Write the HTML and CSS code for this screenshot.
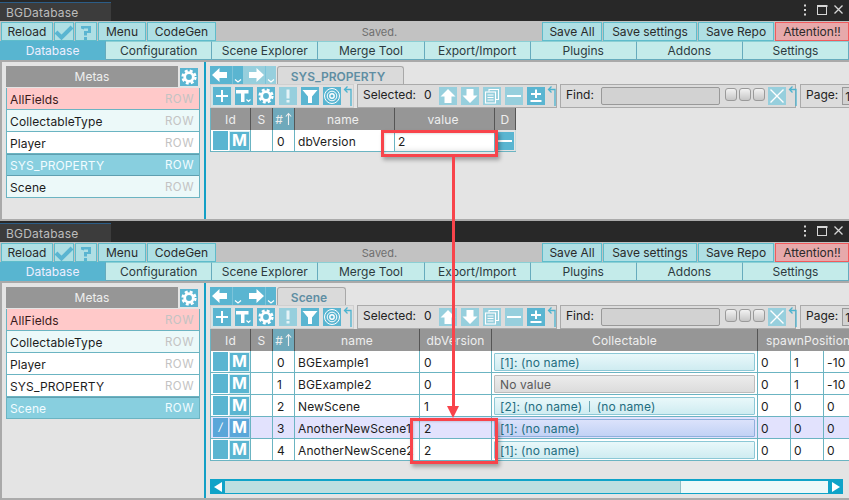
FILE: index.html
```html
<!DOCTYPE html>
<html lang="en">
<head>
<meta charset="utf-8">
<title>BGDatabase</title>
<link rel="stylesheet" href="styles.css">
</head>
<body>
<svg class="defs" width="0" height="0" aria-hidden="true">
  <symbol id="i-gear" viewBox="0 0 18 18"><circle cx="9" cy="9" r="4.300" fill="none" stroke="#fff" stroke-width="2.800"/><circle cx="9" cy="9" r="6.400" fill="none" stroke="#fff" stroke-width="2.400" stroke-dasharray="2.900 2.125"/></symbol>
  <symbol id="i-left" viewBox="0 0 22 18"><path d="M2 9l7.500-7v4H17v6H9.500v4z" fill="#fff"/></symbol>
  <symbol id="i-right" viewBox="0 0 22 18"><path d="M21 9l-7.500-7v4H6v6h7.500v4z" fill="#fff"/></symbol>
  <symbol id="i-drop" viewBox="0 0 10 18"><path d="M2 13.500l3 2.500 3-2.500" fill="none" stroke="#fff" stroke-width="1.200"/></symbol>
  <symbol id="i-plus" viewBox="0 0 18 18"><path d="M8 3h2v5h5v2h-5v5H8v-5H3V8h5z" fill="#fff"/></symbol>
  <symbol id="i-field" viewBox="0 0 18 18"><path d="M1 3h12.500v3.500H9.500V15H6V6.500H1z" fill="#fff"/><path d="M11.500 12.500l2 2 2-2" fill="none" stroke="#fff" stroke-width="1.100"/></symbol>
  <symbol id="i-warn" viewBox="0 0 18 18"><path d="M7.500 2.500h3v9h-3zM7.500 13h3v2.500h-3z" fill="#fff" opacity=".75"/></symbol>
  <symbol id="i-filter" viewBox="0 0 18 18"><path d="M1.500 3h15l-5.500 6.500V16H7V9.500z" fill="#fff"/></symbol>
  <symbol id="i-target" viewBox="0 0 18 18"><g fill="none" stroke="#fff"><circle cx="9" cy="9" r="7.500"/><circle cx="9" cy="9" r="4.800"/><circle cx="9" cy="9" r="2.200" stroke-width="1.400"/></g></symbol>
  <symbol id="i-bent" viewBox="0 0 10 22"><path d="M8 21V4.500H2.500M4.500 1.500L1.500 4.500 4.500 7.500" fill="none" stroke="#4cb3cf" stroke-width="1.300"/></symbol>
  <symbol id="i-up" viewBox="0 0 18 18"><path d="M9 2l7.500 7.500H12.500V16h-7V9.500H1.500z" fill="#fff"/></symbol>
  <symbol id="i-down" viewBox="0 0 18 18"><path d="M9 16L1.500 8.500H5.500V2h7v6.500h4z" fill="#fff"/></symbol>
  <symbol id="i-copy" viewBox="0 0 18 18"><g fill="none" stroke="#fff" stroke-width="1.100"><path d="M6 4.500V2.500h9.500v10H13"/><rect x="2.500" y="5" width="10" height="11"/><path d="M4.500 8h6M4.500 10.500h6M4.500 13h6"/></g></symbol>
  <symbol id="i-minus" viewBox="0 0 18 18"><path d="M2 8h14v2H2z" fill="#fff"/></symbol>
  <symbol id="i-pm" viewBox="0 0 18 18"><path d="M8 2.500h2v3.500h4v2h-4v3H8V8H4V6h4zM3.500 13h11v2h-11z" fill="#fff"/></symbol>
  <symbol id="i-x" viewBox="0 0 18 18"><path d="M2.500 2.500l13 13M15.500 2.500l-13 13" fill="none" stroke="#fff" stroke-width="1.400"/></symbol>
  <symbol id="i-check" viewBox="0 0 20 18"><path d="M2 9l5.500 5.500L18 4" fill="none" stroke="#5ab5d1" stroke-width="4"/></symbol>
  <symbol id="i-q" viewBox="0 0 20 18"><path d="M5 5.500V3h10v7h-4v2.500H8V8h4V5.500H8v1z" fill="#5ab5d1"/><path d="M8 14h3v3H8z" fill="#5ab5d1"/></symbol>
  <symbol id="i-controls" viewBox="0 0 44 14"><g fill="#d6d6d6"><path d="M1 1.500h2v2H1zM1 6h2v2H1zM1 10.500h2v2H1z"/></g><rect x="14.500" y="2.500" width="9" height="9" fill="none" stroke="#d6d6d6"/><path d="M14.500 2h10v2h-10z" fill="#d6d6d6"/><path d="M31.500 2.500l8 8M39.500 2.500l-8 8" stroke="#d6d6d6" stroke-width="1.300"/></symbol>
  <symbol id="i-sort" viewBox="0 0 7 14"><path d="M3.500 13V2M.8 4.500L3.500 1.500 6.200 4.500" fill="none" stroke="#eee" stroke-width="1.100"/></symbol>
</svg>

<div class="win win-a">
  <div class="titlebar"><div class="wintab">BGDatabase</div><svg class="winctl"><use href="#i-controls"/></svg></div>
  <div class="toolbar">
    <button class="tb w-reload">Reload</button><button class="tb w-ic"><svg class="ic20"><use href="#i-check"/></svg></button><button class="tb w-ic2"><svg class="ic20"><use href="#i-q"/></svg></button><button class="tb w-menu">Menu</button><button class="tb w-code">CodeGen</button>
    <div class="saved">Saved.</div>
    <button class="tb w-saveall">Save All</button><button class="tb w-saveset">Save settings</button><button class="tb w-saverepo">Save Repo</button><button class="tb attn">Attention!!</button>
  </div>
  <div class="tabs"><div class="tab active">Database</div><div class="tab">Configuration</div><div class="tab">Scene Explorer</div><div class="tab">Merge Tool</div><div class="tab">Export/Import</div><div class="tab">Plugins</div><div class="tab">Addons</div><div class="tab">Settings</div></div>
  <div class="content">
    <aside class="side">
      <div class="metas-head"><div class="metas">Metas</div><span class="ib gearbtn"><svg><use href="#i-gear"/></svg></span></div>
      <div class="mlist">
        <div class="mrow pink"><span>AllFields</span><em>ROW</em></div>
        <div class="mrow tint"><span>CollectableType</span><em>ROW</em></div>
        <div class="mrow"><span>Player</span><em>ROW</em></div>
        <div class="mrow sel"><span>SYS_PROPERTY</span><em>ROW</em></div>
        <div class="mrow tint"><span>Scene</span><em>ROW</em></div>
      </div>
    </aside>
    <main class="main">
      <div class="nav">
        <span class="navbtn"><svg class="nv"><use href="#i-left"/></svg><svg class="nd"><use href="#i-drop"/></svg></span>
        <span class="navbtn off"><svg class="nv"><use href="#i-right"/></svg><svg class="nd"><use href="#i-drop"/></svg></span>
        <div class="crumb w-sys">SYS_PROPERTY</div>
      </div>
      <div class="bar">
        <div class="grp g1">
          <span class="ib framed"><svg><use href="#i-plus"/></svg></span><span class="ib"><svg><use href="#i-field"/></svg></span><span class="ib"><svg><use href="#i-gear"/></svg></span><span class="ib dis"><svg><use href="#i-warn"/></svg></span><span class="ib"><svg><use href="#i-filter"/></svg></span><span class="ib"><svg><use href="#i-target"/></svg></span><svg class="bent"><use href="#i-bent"/></svg>
        </div>
        <div class="grp g2">
          <span class="lbl sel-l">Selected:</span><span class="lbl sel-n">0</span>
          <span class="ib dis"><svg><use href="#i-up"/></svg></span><span class="ib dis"><svg><use href="#i-down"/></svg></span><span class="ib dis"><svg><use href="#i-copy"/></svg></span><span class="ib dis"><svg><use href="#i-minus"/></svg></span><span class="ib"><svg><use href="#i-pm"/></svg></span><svg class="bent"><use href="#i-bent"/></svg>
        </div>
        <div class="grp g3">
          <span class="lbl">Find:</span><span class="findin"></span>
          <span class="togs"><span class="tog"></span><span class="tog"></span><span class="tog"></span></span>
          <span class="ib dis"><svg><use href="#i-x"/></svg></span><svg class="bent"><use href="#i-bent"/></svg>
        </div>
        <div class="grp g4"><span class="lbl">Page:</span><span class="pagein">1</span></div>
      </div>
      <div class="grid grid-a">
        <div class="row head"><div class="c c-id">Id</div><div class="c c-s">S</div><div class="c c-n sorted">#<svg class="ar"><use href="#i-sort"/></svg></div><div class="c c-name1">name</div><div class="c c-val">value</div><div class="c c-d">D</div></div>
        <div class="row"><div class="c c-id idc"><i></i><b>M</b></div><div class="c c-s"></div><div class="c c-n">0</div><div class="c c-name1">dbVersion</div><div class="c c-val hl">2</div><div class="c c-d dcell"><span class="ib del"><svg><use href="#i-minus"/></svg></span></div></div>
      </div>
    </main>
  </div>
</div>

<div class="win win-b">
  <div class="titlebar"><div class="wintab">BGDatabase</div><svg class="winctl"><use href="#i-controls"/></svg></div>
  <div class="toolbar">
    <button class="tb w-reload">Reload</button><button class="tb w-ic"><svg class="ic20"><use href="#i-check"/></svg></button><button class="tb w-ic2"><svg class="ic20"><use href="#i-q"/></svg></button><button class="tb w-menu">Menu</button><button class="tb w-code">CodeGen</button>
    <div class="saved">Saved.</div>
    <button class="tb w-saveall">Save All</button><button class="tb w-saveset">Save settings</button><button class="tb w-saverepo">Save Repo</button><button class="tb attn">Attention!!</button>
  </div>
  <div class="tabs"><div class="tab active">Database</div><div class="tab">Configuration</div><div class="tab">Scene Explorer</div><div class="tab">Merge Tool</div><div class="tab">Export/Import</div><div class="tab">Plugins</div><div class="tab">Addons</div><div class="tab">Settings</div></div>
  <div class="content">
    <aside class="side">
      <div class="metas-head"><div class="metas">Metas</div><span class="ib gearbtn"><svg><use href="#i-gear"/></svg></span></div>
      <div class="mlist">
        <div class="mrow pink"><span>AllFields</span><em>ROW</em></div>
        <div class="mrow tint"><span>CollectableType</span><em>ROW</em></div>
        <div class="mrow"><span>Player</span><em>ROW</em></div>
        <div class="mrow"><span>SYS_PROPERTY</span><em>ROW</em></div>
        <div class="mrow sel"><span>Scene</span><em>ROW</em></div>
      </div>
    </aside>
    <main class="main">
      <div class="nav">
        <span class="navbtn"><svg class="nv"><use href="#i-left"/></svg><svg class="nd"><use href="#i-drop"/></svg></span>
        <span class="navbtn"><svg class="nv"><use href="#i-right"/></svg><svg class="nd"><use href="#i-drop"/></svg></span>
        <div class="crumb w-scene">Scene</div>
      </div>
      <div class="bar">
        <div class="grp g1">
          <span class="ib framed"><svg><use href="#i-plus"/></svg></span><span class="ib"><svg><use href="#i-field"/></svg></span><span class="ib"><svg><use href="#i-gear"/></svg></span><span class="ib dis"><svg><use href="#i-warn"/></svg></span><span class="ib"><svg><use href="#i-filter"/></svg></span><span class="ib"><svg><use href="#i-target"/></svg></span><svg class="bent"><use href="#i-bent"/></svg>
        </div>
        <div class="grp g2">
          <span class="lbl sel-l">Selected:</span><span class="lbl sel-n">0</span>
          <span class="ib dis"><svg><use href="#i-up"/></svg></span><span class="ib dis"><svg><use href="#i-down"/></svg></span><span class="ib dis"><svg><use href="#i-copy"/></svg></span><span class="ib dis"><svg><use href="#i-minus"/></svg></span><span class="ib"><svg><use href="#i-pm"/></svg></span><svg class="bent"><use href="#i-bent"/></svg>
        </div>
        <div class="grp g3">
          <span class="lbl">Find:</span><span class="findin"></span>
          <span class="togs"><span class="tog"></span><span class="tog"></span><span class="tog"></span></span>
          <span class="ib dis"><svg><use href="#i-x"/></svg></span><svg class="bent"><use href="#i-bent"/></svg>
        </div>
        <div class="grp g4"><span class="lbl">Page:</span><span class="pagein">1</span></div>
      </div>
      <div class="grid">
        <div class="row head"><div class="c c-id">Id</div><div class="c c-s">S</div><div class="c c-n sorted">#<svg class="ar"><use href="#i-sort"/></svg></div><div class="c c-name2">name</div><div class="c c-db">dbVersion</div><div class="c c-coll">Collectable</div><div class="c c-spawn">spawnPosition</div></div>
        <div class="row"><div class="c c-id idc"><i></i><b>M</b></div><div class="c c-s"></div><div class="c c-n">0</div><div class="c c-name2">BGExample1</div><div class="c c-db">0</div><div class="c c-coll"><span class="fld">[1]: (no name)</span></div><div class="c c-x">0</div><div class="c c-x">1</div><div class="c c-z">-10</div></div>
        <div class="row"><div class="c c-id idc"><i></i><b>M</b></div><div class="c c-s"></div><div class="c c-n">1</div><div class="c c-name2">BGExample2</div><div class="c c-db">0</div><div class="c c-coll"><span class="fld none">No value</span></div><div class="c c-x">0</div><div class="c c-x">1</div><div class="c c-z">-10</div></div>
        <div class="row"><div class="c c-id idc"><i></i><b>M</b></div><div class="c c-s"></div><div class="c c-n">2</div><div class="c c-name2">NewScene</div><div class="c c-db">1</div><div class="c c-coll"><span class="fld">[2]: (no name) <u></u> (no name)</span></div><div class="c c-x">0</div><div class="c c-x">0</div><div class="c c-z">0</div></div>
        <div class="row hover"><div class="c c-id idc"><i>/</i><b>M</b></div><div class="c c-s"></div><div class="c c-n">3</div><div class="c c-name2">AnotherNewScene1</div><div class="c c-db">2</div><div class="c c-coll"><span class="fld">[1]: (no name)</span></div><div class="c c-x">0</div><div class="c c-x">0</div><div class="c c-z">0</div></div>
        <div class="row"><div class="c c-id idc"><i></i><b>M</b></div><div class="c c-s"></div><div class="c c-n">4</div><div class="c c-name2">AnotherNewScene2</div><div class="c c-db">2</div><div class="c c-coll"><span class="fld">[1]: (no name)</span></div><div class="c c-x">0</div><div class="c c-x">0</div><div class="c c-z">0</div></div>
      </div>
      <div class="scroll"><span class="sbtn"><span class="tri-l"></span></span><span class="thumb"></span><span class="strack"></span><span class="sbtn"><span class="tri-r"></span></span></div>
    </main>
  </div>
</div>

<div class="note box-a"></div>
<div class="note box-b"></div>
<div class="note link"></div>
<div class="note head-tip"></div>
</body>
</html>
```
FILE: styles.css
```css
* { box-sizing: border-box; }
html, body { margin: 0; padding: 0; }
body {
  width: 849px; height: 500px; overflow: hidden; position: relative;
  background: #282828; color: #1c1c1c;
  font: 12px/1 Inter, "Liberation Sans", sans-serif;
}
.defs { position: absolute; }
svg { display: block; }

.win { display: flex; flex-direction: column; overflow: hidden; }
.win-a { height: 221px; }
.win-b { height: 279px; }
.titlebar { height: 21px; flex: none; display: flex; justify-content: space-between; background: #282828; }
.wintab {
  width: 111px; height: 19px; margin-top: 2px; padding: 4px 0 0 6px;
  background: #3c3c3c; border-top: 1px solid #2c5d87; color: #bdbdbd; letter-spacing: .2px;
}
.winctl { width: 44px; height: 14px; margin: 3px 2px 0 0; }

.toolbar { height: 20px; flex: none; display: flex; align-items: flex-start; padding: 1px 0 0 1px; background: #c2c2c2; }
.tb {
  height: 19px; margin: 0 1px 0 0; padding: 0; border: 1px solid #5fbccb; background: #afdfe4;
  color: #2a2a2a; font: 12px/1 Inter, "Liberation Sans", sans-serif;
  display: flex; align-items: center; justify-content: center;
}
.w-reload { width: 52px; } .w-ic { width: 20px; } .w-ic2 { width: 22px; } .w-menu { width: 48px; } .w-code { width: 69px; }
.w-saveall { width: 60px; } .w-saveset { width: 94px; } .w-saverepo { width: 76px; }
.attn { width: 74px; margin-right: 0; background: #e7a9ab; border-color: #f25a5c; }
.ic20 { width: 20px; height: 18px; flex: none; }
.saved { flex: 1; padding-top: 5px; text-align: center; color: #6f6f6f; font-size: 11px; }

.tabs { height: 19px; flex: none; display: grid; grid-template-columns: repeat(8, 1fr); background: #c4ebea; width: 849px; }
.tab {
  border: 1px solid #67abbd; border-top-color: #8ccfd4; border-left: 0; padding-top: 3px;
  text-align: center; color: #2c3a3e; background: #c4ebea;
}
.tab.active { background: #58b5d0; color: #eef; border-color: #58b5d0 #67abbd #58b5d0 #58b5d0; }

.content { flex: 1; display: flex; min-height: 0; background: #e4e4e4; border-top: 2px solid #a9a9a9; border-bottom: 2px solid #ababab; border-left: 2px solid #a9a9a9; }
.side { width: 204px; flex: none; padding: 4px 0 0 4px; border-right: 2px solid #13a0c6; }
.metas-head { display: flex; align-items: flex-start; width: 194px; height: 22px; gap: 2px; }
.metas { width: 172px; height: 21px; padding-top: 5px; background: #969696; color: #eee; text-align: center; }
.gearbtn { margin-top: 2px; }
.mlist { width: 194px; border: 1px solid #6bb4c2; border-top: 0; }
.mrow { height: 22px; display: flex; justify-content: space-between; padding: 6px 5px 0 3px; background: #fff; border-bottom: 1px solid #6bb4c2; letter-spacing: .12px; }
.mrow:last-child { height: 21px; border-bottom: 0; }
.mrow em { font-style: normal; color: #c3c3c3; letter-spacing: .5px; font-size: 11.500px; }
.mrow.pink { background: #ffc9c9; color: #3a1a1a; }
.mrow.tint { background: #ecf9f9; }
.mrow.sel { background: #88cfdf; color: #f2fcff; border-bottom-color: #5f9fb0; box-shadow: inset 0 1px 0 #5f9fb0; }
.mrow.sel em { color: #f2fcff; }

.main { flex: 1; min-width: 0; padding: 4px 0 0 4px; overflow: hidden; }
.nav { height: 18px; display: flex; }
.navbtn { display: flex; width: 33px; height: 18px; background: #5ab5d1; }
.navbtn.off { background: #97cfdd; }
.nv { width: 23px; height: 18px; border-right: 1px solid #7cc4da; }
.nd { width: 10px; height: 18px; }
.crumb {
  height: 18px; margin-left: 1px; padding: 4px 5px 0 0; background: #dadada; border: 1px solid #a8a8a8; border-bottom: 0;
  border-radius: 3px 3px 0 0; color: #5f8ea3; font-weight: 600; text-align: center;
}
.w-sys { width: 127px; } .w-scene { width: 69px; }

.bar { height: 24px; display: flex; gap: 3px; width: 640px; }
.grp { height: 24px; flex: none; display: flex; align-items: center; background: #dcdcdc; border: 1px solid #aaa; gap: 4px; }
.grp > * { flex: none; }
.g1 { width: 144px; padding-left: 2px; background: #e0e0e0; border-color: #cfcfcf; }
.g2 { width: 200px; padding-left: 5px; }
.g3 { width: 236px; padding-left: 5px; }
.g4 { width: 60px; padding-left: 5px; margin-left: 1px; }
.lbl { color: #222; margin-top: -2px; }
.sel-l { width: 52px; }
.sel-n { width: 11px; margin-left: 5px; }
.ib { width: 18px; height: 18px; flex: none; background: #5ab5d1; display: block; }
.ib svg { width: 18px; height: 18px; }
.ib.dis { background: #97cfdd; }
.ib.framed { box-shadow: 0 0 0 1.500px #cfe3e6; }
.bent { width: 10px; height: 22px; flex: none; margin-left: -2px; }
.findin { width: 119px; height: 18px; margin-left: 3px; background: #d2d2d2; border: 1px solid #999; border-radius: 2px; }
.togs { display: flex; gap: 2px; margin: 0 -1px 3px 1px; }
.tog { width: 12px; height: 13px; border: 1px solid #9a9a9a; border-radius: 3px; background: linear-gradient(#f2f2f2, #c6c6c6); }
.pagein { width: 30px; height: 18px; padding: 3px 0 0 2px; background: #d2d2d2; border: 1px solid #999; }

.grid { display: flex; flex-direction: column; border-left: 1px solid #6bb4c2; width: 639px; }
.grid-a { width: 306px; }
.row { display: flex; height: 22px; background: #fff; border-bottom: 1px solid #6bb4c2; }
.row.head { background: #969696; color: #eee; border-bottom: 0; }
.row.hover { background: #e2e2fd; }
.c { flex: none; height: 100%; border-right: 1px solid #6bb4c2; padding: 6px 0 0 4px; letter-spacing: .12px; white-space: nowrap; overflow: hidden; }
.head .c { border-right-color: #555; text-align: center; padding-left: 0; }
.c-id { width: 40px; } .c-s { width: 22px; } .c-n { width: 22px; }
.c-name1 { width: 100px; padding-left: 3px; } .c-val { width: 100px; } .c-d { width: 21px; border-right: 1px solid #c8d8da; }
.head .c-val, .head .c-name1 { padding-right: 3px; }
.c-name2 { width: 125px; padding-left: 3px; } .c-db { width: 72px; } .c-coll { width: 266px; } .c-spawn { width: 92px; }
.c-x { width: 33px; padding-left: 3px; } .c-z { width: 26px; border-right: 0; padding-left: 3px; }
.head .c-spawn { text-align: left; padding-left: 8px; border-right: 0; }
.sorted { background: #6fa9bb; display: flex; justify-content: center; gap: 2px; }
.ar { width: 7px; height: 14px; margin-top: -2px; }
.idc { padding: 1px 0 0 2px; display: flex; gap: 1px; }
.idc i { width: 15px; height: 19px; background: #5ab5d1; color: #fff; text-align: center; padding-top: 4px; font-size: 11px; }
.idc b { width: 21px; height: 20px; border: 1px solid #d8eef2; background: #5ab5d1; color: #fff; text-align: center; font-size: 16px; line-height: 17px; font-weight: 700; letter-spacing: 0; }
.hover .idc i { background: #5aa6d9; }
.hover .idc b { background: #5aa6d9; border-color: #a9d0f0; }
.hl { background: #fff; box-shadow: inset 0 -6px 6px -6px #ddd; padding-left: 3px; }
.dcell { padding: 2px 0 0 1px; background: #e4e4e4; }
.del svg { width: 18px; height: 18px; }
.row:not(.head) .c-coll { padding: 2px 0 0 2px; }
.fld {
  display: block; width: 261px; height: 18px; padding: 3px 0 0 5px; border: 1px solid #8cc8d6; border-radius: 1px;
  background: linear-gradient(#e9f8fa, #cfecf1); color: #1f6d80;
}
.fld u { display: inline-block; width: 1.500px; height: 11px; margin: 0 3px -1px; background: #6ba6b3; }
.fld.none { background: linear-gradient(#ececec, #dcdcdc); border-color: #bcbcbc; color: #5a5a5a; }
.hover .fld { background: linear-gradient(#dbe2fb, #c2d2f5); border-color: #8fb0dc; }

.scroll { display: flex; width: 633px; height: 15px; margin-top: 18px; background: #ecf9f9; border: solid #0fa3c8; border-width: 2px 0 1px; }
.sbtn { width: 15px; flex: none; background: #0fa3c8; display: flex; align-items: center; justify-content: center; }
.thumb { width: 456px; background: #bcdfe0; border-right: 1px solid #8fbfc6; }
.strack { flex: 1; }
.tri-l, .tri-r { width: 0; height: 0; border: 5.500px solid transparent; border-width: 5.500px 8px; }
.tri-l { border-left: 0; border-right-color: #fff; }
.tri-r { border-right: 0; border-left-color: #fff; }

.note { position: absolute; }
.box-a, .box-b { border: 3px solid #f8444b; box-shadow: 2px 3px 4px rgba(0,0,0,.3), inset 1px 1px 2px rgba(0,0,0,.12); }
.box-a { left: 381px; top: 130px; width: 117px; height: 27px; }
.box-b { left: 410px; top: 418px; width: 88px; height: 46px; }
.link { left: 452px; top: 157px; width: 3px; height: 250px; background: #f8444b; }
.head-tip { left: 447px; top: 406px; width: 0; height: 0; border: 6.500px solid transparent; border-top: 12px solid #f8444b; border-bottom: 0; }
```
